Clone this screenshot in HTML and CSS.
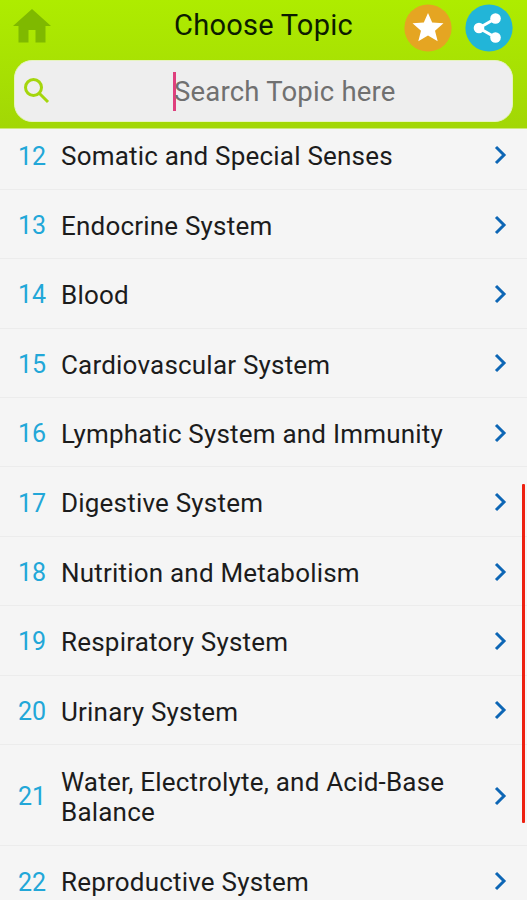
FILE: index.html
```html
<!DOCTYPE html>
<html lang="en">
<head>
    <meta charset="UTF-8">
    <meta name="viewport" content="width=device-width, initial-scale=1.0">
    <title>Choose Topic</title>
    <link rel="stylesheet" href="styles.css">
</head>
<body>
<div class="app">
    <header class="header">
        <div class="topbar">
            <svg class="home" viewBox="0 0 38 34"><path d="M19 0L38 17H32.500V33.500H22.500V21H15.500V33.500H5.500V17H0Z"/></svg>
            <h1>Choose Topic</h1>
            <div class="actions">
                <svg class="round" viewBox="0 0 48 48">
                    <circle class="star-bg" cx="24" cy="24" r="23.600"/>
                    <path class="white" d="M24 9L28.200 18.600L39.500 19.200L31 26.700L33.700 37.200L24 31.600L14.300 37.200L17 26.700L8.500 19.200L19.800 18.600Z"/>
                </svg>
                <svg class="round" viewBox="0 0 48 48">
                    <circle class="share-bg" cx="24" cy="24" r="23.600"/>
                    <path class="share-line" d="M30.500 14.500L14 24L30.500 33.500"/>
                    <circle class="white" cx="14" cy="24" r="5.300"/>
                    <circle class="white" cx="30.500" cy="14.500" r="5.300"/>
                    <circle class="white" cx="30.500" cy="33.500" r="5.300"/>
                </svg>
            </div>
        </div>
        <div class="search">
            <svg class="search-icon" viewBox="0 0 26 26"><circle cx="9.500" cy="9.500" r="8"/><path d="M15 15L24 24"/></svg>
            <div class="field"><span class="caret"></span><span class="placeholder">Search Topic here</span></div>
        </div>
    </header>

    <main class="list">
        <ul class="topics" id="topics"></ul>
        <div class="scrollbar"></div>
    </main>
</div>

<script src="script.js"></script>
</body>
</html>
```

FILE: styles.css
```css
* { margin: 0; padding: 0; box-sizing: border-box; }
body { font-family: Roboto, sans-serif; background: #f5f5f5; color: #1c1c1c; }
.app { height: 900px; display: flex; flex-direction: column; overflow: hidden; }

.header { height: 129px; flex: none; background: linear-gradient(#aeec00, #a2d705); padding: 0 14px; border-bottom: 1px solid #cde97c; }
.topbar { height: 60px; display: grid; grid-template-columns: 108px 1fr 108px; align-items: start; }
.home { width: 38px; height: 34px; margin: 9px 0 0 -1px; fill: #7fb900; }
h1 { font-size: 29px; font-weight: 400; line-height: 34px; margin-top: 8px; text-align: center; color: #0c1c00; letter-spacing: 0.25px; }
.actions { display: flex; gap: 13px; margin: 4px 0 0 -1px; }
.round { width: 48px; height: 48px; flex: none; }
.star-bg { fill: #e5a522; }
.share-bg { fill: #22b5d8; }
.white { fill: #fff; }
.share-line { fill: none; stroke: #fff; stroke-width: 3; }

.search { height: 62px; background: #eee; border-radius: 18px; border: 1px solid #e6f4c0; display: flex; align-items: center; padding-left: 9px; }
.search-icon { width: 26px; height: 26px; fill: none; stroke: #a5d60d; stroke-width: 3; }
.field { flex: 1; display: flex; align-items: center; padding-left: 123px; }
.caret { width: 3px; height: 39px; background: #df3f7d; }
.placeholder { font-size: 27.500px; line-height: 34px; color: #707070; margin: 2px 0 0 -2px; letter-spacing: 0.2px; }

.list { flex: 1; position: relative; overflow: hidden; }
/* list is scrolled, first row is partly under the header */
.topics { list-style: none; margin-top: -8.500px; }
.row { height: 69.400px; display: flex; align-items: center; padding-left: 18px; padding-right: 20px; border-bottom: 1.500px solid #ececec; }
.row.tall { height: 101.400px; }
.num { width: 43px; flex: none; font-size: 25px; padding-top: 3px; color: #22a7d8; }
.name { flex: 1; font-size: 26px; line-height: 30.500px; padding: 4px 40px 0 0; letter-spacing: 0.2px; }
.arrow { width: 13px; height: 20px; flex: none; margin-top: 1px; fill: none; stroke: #0d66b5; stroke-width: 3; }
.scrollbar { position: absolute; top: 355px; right: 2px; width: 3px; height: 339px; background: #ee2010; border-radius: 1px; }
```

FILE: script.js
```js
const topics = [
    [12, "Somatic and Special Senses"],
    [13, "Endocrine System"],
    [14, "Blood"],
    [15, "Cardiovascular System"],
    [16, "Lymphatic System and Immunity"],
    [17, "Digestive System"],
    [18, "Nutrition and Metabolism"],
    [19, "Respiratory System"],
    [20, "Urinary System"],
    [21, "Water, Electrolyte, and Acid-Base Balance"],
    [22, "Reproductive System"]
];

const list = document.getElementById("topics");

topics.forEach(([num, name]) => {
    const row = document.createElement("li");
    row.className = name.length > 35 ? "row tall" : "row";
    row.innerHTML = `<span class="num">${num}</span><span class="name">${name}</span>
        <svg class="arrow" viewBox="0 0 13 20"><path d="M2 2L10 10L2 18"/></svg>`;
    list.appendChild(row);
});
```
